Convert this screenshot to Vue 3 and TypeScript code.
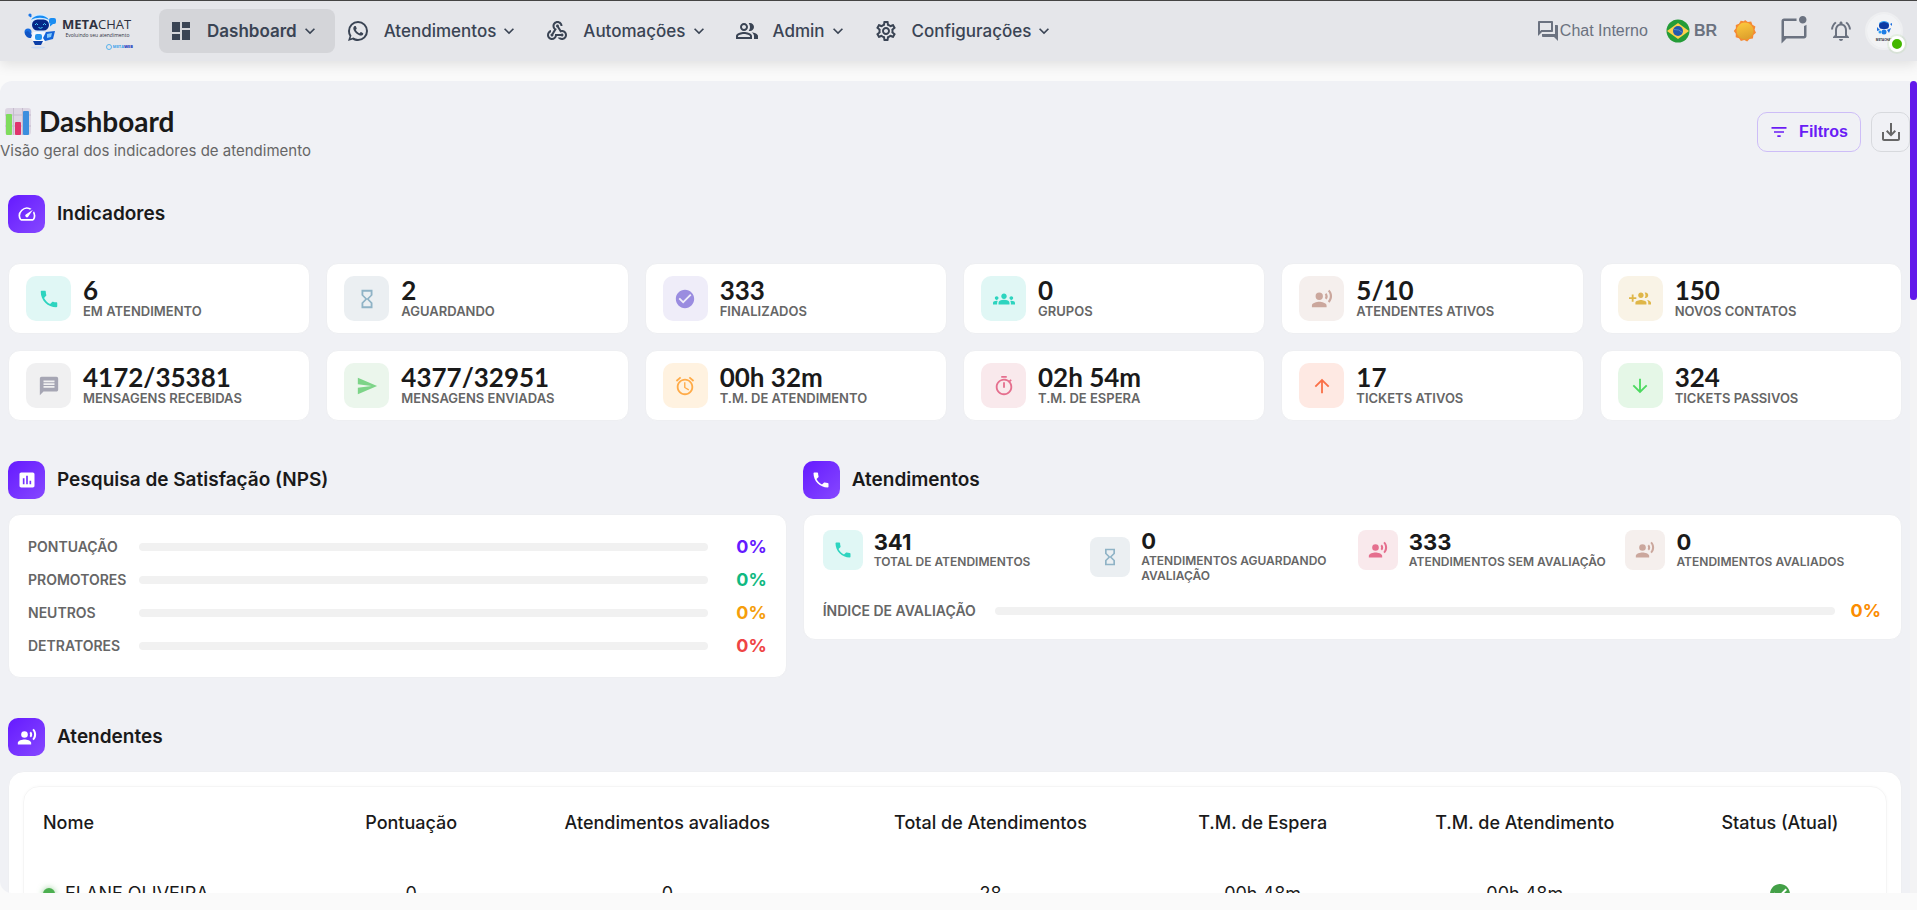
<script setup lang="ts">
interface NavItem { label: string; icon: string; active?: boolean }
interface Kpi { value: string; label: string; icon: string; tone: string }
interface Bar { label: string; value: number; tone: string }
interface Attendant { name: string; score: number; rated: number; total: number; wait: string; service: string }

const icons: Record<string, string> = {
  dashboard: 'M3 13h8V3H3v10zm0 8h8v-6H3v6zm10 0h8V11h-8v10zm0-18v6h8V3h-8z',
  whatsapp: 'M16.75 13.96c.25.13.41.2.46.3.06.11.04.61-.21 1.18-.2.56-1.24 1.1-1.7 1.12-.46.02-.47.36-2.96-.73-2.49-1.09-3.99-3.75-4.11-3.92-.12-.17-.96-1.38-.92-2.61.05-1.22.69-1.8.95-2.04.24-.26.51-.29.68-.26h.47c.15 0 .36-.06.55.45l.69 1.87c.06.13.1.28.01.44l-.27.41-.39.42c-.12.12-.26.25-.12.5.12.26.62 1.09 1.32 1.78.91.88 1.71 1.17 1.95 1.3.24.14.39.12.54-.04l.81-.94c.19-.25.35-.19.58-.11l1.67.88M12 2a10 10 0 0 1 10 10 10 10 0 0 1-10 10c-1.97 0-3.8-.57-5.35-1.55L2 22l1.55-4.65A9.969 9.969 0 0 1 2 12 10 10 0 0 1 12 2m0 2a8 8 0 0 0-8 8c0 1.72.54 3.31 1.46 4.61L4.5 19.5l2.89-.96A7.95 7.95 0 0 0 12 20a8 8 0 0 0 8-8 8 8 0 0 0-8-8z',
  webhook: 'M10 15h5.88c.27-.31.67-.5 1.12-.5.83 0 1.5.67 1.5 1.5s-.67 1.5-1.5 1.5c-.44 0-.84-.19-1.12-.5H11.9c-.46 2.28-2.48 4-4.9 4-2.76 0-5-2.24-5-5 0-2.42 1.72-4.44 4-4.9v2.07c-1.16.41-2 1.53-2 2.83 0 1.65 1.35 3 3 3s3-1.35 3-3v-1zm2.5-11c1.65 0 3 1.35 3 3h2c0-2.76-2.24-5-5-5s-5 2.24-5 5c0 1.43.6 2.71 1.55 3.62l-2.35 3.9c-.68.14-1.2.75-1.2 1.48 0 .83.67 1.5 1.5 1.5s1.5-.67 1.5-1.5c0-.16-.02-.31-.07-.45l3.38-5.63C10.49 9.61 9.5 8.42 9.5 7c0-1.65 1.35-3 3-3zm4.5 9c-.64 0-1.23.2-1.72.54l-3.05-5.07C11.53 8.35 11 7.74 11 7c0-.83.67-1.5 1.5-1.5S14 6.17 14 7c0 .15-.02.29-.06.43l2.19 3.65c.28-.05.57-.08.87-.08 2.76 0 5 2.24 5 5s-2.24 5-5 5c-1.85 0-3.47-1.01-4.33-2.5h2.67c.48.32 1.05.5 1.66.5 1.65 0 3-1.35 3-3s-1.35-3-3-3z',
  people: 'M16.67 13.13C18.04 14.06 19 15.32 19 17v3h4v-3c0-2.18-3.57-3.47-6.33-3.87zM15 12c2.21 0 4-1.79 4-4s-1.79-4-4-4c-.47 0-.91.1-1.33.24C14.5 5.27 15 6.58 15 8s-.5 2.73-1.33 3.76c.42.14.86.24 1.33.24zM9 12c2.21 0 4-1.79 4-4s-1.79-4-4-4-4 1.79-4 4 1.79 4 4 4zm0-6c1.1 0 2 .9 2 2s-.9 2-2 2-2-.9-2-2 .9-2 2-2zm0 7c-2.67 0-8 1.34-8 4v3h16v-3c0-2.66-5.33-4-8-4zm6 5H3v-.99C3.2 16.29 6.3 15 9 15s5.8 1.29 6 2v1z',
  settings: 'M19.43 12.98c.04-.32.07-.64.07-.98 0-.34-.03-.66-.07-.98l2.11-1.65c.19-.15.24-.42.12-.64l-2-3.46c-.09-.16-.26-.25-.44-.25-.06 0-.12.01-.17.03l-2.49 1c-.52-.4-1.08-.73-1.69-.98l-.38-2.65C14.46 2.18 14.25 2 14 2h-4c-.25 0-.46.18-.49.42l-.38 2.65c-.61.25-1.17.59-1.69.98l-2.49-1c-.06-.02-.12-.03-.18-.03-.17 0-.34.09-.43.25l-2 3.46c-.13.22-.07.49.12.64l2.11 1.65c-.04.32-.07.65-.07.98 0 .33.03.66.07.98l-2.11 1.65c-.19.15-.24.42-.12.64l2 3.46c.09.16.26.25.44.25.06 0 .12-.01.17-.03l2.49-1c.52.4 1.08.73 1.69.98l.38 2.65c.03.24.24.42.49.42h4c.25 0 .46-.18.49-.42l.38-2.65c.61-.25 1.17-.59 1.69-.98l2.49 1c.06.02.12.03.18.03.17 0 .34-.09.43-.25l2-3.46c.12-.22.07-.49-.12-.64l-2.11-1.65zm-1.98-1.71c.04.31.05.52.05.73 0 .21-.02.43-.05.73l-.14 1.13.89.7 1.08.84-.7 1.21-1.27-.51-1.04-.42-.9.68c-.43.32-.84.56-1.25.73l-1.06.43-.16 1.13-.2 1.35h-1.4l-.19-1.35-.16-1.13-1.06-.43c-.43-.18-.83-.41-1.23-.71l-.91-.7-1.06.43-1.27.51-.7-1.21 1.08-.84.89-.7-.14-1.13c-.03-.31-.05-.54-.05-.74s.02-.43.05-.73l.14-1.13-.89-.7-1.08-.84.7-1.21 1.27.51 1.04.42.9-.68c.43-.32.84-.56 1.25-.73l1.06-.43.16-1.13.2-1.35h1.39l.19 1.35.16 1.13 1.06.43c.43.18.83.41 1.23.71l.91.7 1.06-.43 1.27-.51.7 1.21-1.07.85-.89.7.14 1.13zM12 8c-2.21 0-4 1.79-4 4s1.79 4 4 4 4-1.79 4-4-1.79-4-4-4zm0 6c-1.1 0-2-.9-2-2s.9-2 2-2 2 .9 2 2-.9 2-2 2z',
  chevron: 'M16.59 8.59 12 13.17 7.41 8.59 6 10l6 6 6-6z',
  forum: 'M15 4v7H5.17L4 12.17V4h11m1-2H3c-.55 0-1 .45-1 1v14l4-4h10c.55 0 1-.45 1-1V3c0-.55-.45-1-1-1zm5 4h-2v9H6v2c0 .55.45 1 1 1h11l4 4V7c0-.55-.45-1-1-1z',
  unread: 'M22 6.98V16c0 1.1-.9 2-2 2H6l-4 4V4c0-1.1.9-2 2-2h10.1c-.06.32-.1.66-.1 1 0 .34.04.68.1 1H4v12h16V7.9c.74-.15 1.42-.48 2-.92zM16 3c0 1.66 1.34 3 3 3s3-1.34 3-3-1.34-3-3-3-3 1.34-3 3z',
  bell: 'M12 22c1.1 0 2-.9 2-2h-4c0 1.1.9 2 2 2zm6-6v-5c0-3.07-1.63-5.64-4.5-6.32V4c0-.83-.67-1.5-1.5-1.5s-1.5.67-1.5 1.5v.68C7.64 5.36 6 7.92 6 11v5l-2 2v1h16v-1l-2-2zm-2 1H8v-6c0-2.48 1.51-4.5 4-4.5s4 2.02 4 4.5v6zM7.58 4.08 6.15 2.65C3.75 4.48 2.17 7.3 2.03 10.5h2c.15-2.65 1.51-4.97 3.55-6.42zm12.39 6.42h2c-.15-3.2-1.73-6.02-4.12-7.85l-1.42 1.43c2.02 1.45 3.39 3.77 3.54 6.42z',
  filter: 'M10 18h4v-2h-4v2zM3 6v2h18V6H3zm3 7h12v-2H6v2z',
  download: 'M19 12v7H5v-7H3v7c0 1.1.9 2 2 2h14c1.1 0 2-.9 2-2v-7h-2zm-6 .67 2.59-2.58L17 11.5l-5 5-5-5 1.41-1.41L11 12.67V3h2z',
  speed: 'M20.38 8.57l-1.23 1.85a8 8 0 0 1-.22 7.58H5.07A8 8 0 0 1 15.58 6.85l1.85-1.23A10 10 0 0 0 3.35 19a2 2 0 0 0 1.72 1h13.85a2 2 0 0 0 1.74-1 10 10 0 0 0-.27-10.44zm-9.79 6.84a2 2 0 0 0 2.83 0l5.66-8.49-8.49 5.66a2 2 0 0 0 0 2.83z',
  chart: 'M19 3H5c-1.1 0-2 .9-2 2v14c0 1.1.9 2 2 2h14c1.1 0 2-.9 2-2V5c0-1.1-.9-2-2-2zM9 17H7v-7h2v7zm4 0h-2V7h2v10zm4 0h-2v-4h2v4z',
  phone: 'M6.62 10.79c1.44 2.83 3.76 5.14 6.59 6.59l2.2-2.2c.27-.27.67-.36 1.02-.24 1.12.37 2.33.57 3.57.57.55 0 1 .45 1 1V20c0 .55-.45 1-1 1-9.39 0-17-7.61-17-17 0-.55.45-1 1-1h3.5c.55 0 1 .45 1 1 0 1.25.2 2.45.57 3.57.11.35.03.74-.25 1.02l-2.2 2.2z',
  voice: 'M9 5a4 4 0 1 0 0 8 4 4 0 0 0 0-8zM9 15c-2.67 0-8 1.34-8 4v2h16v-2c0-2.66-5.33-4-8-4zm7.76-9.64-1.68 1.69c.84 1.18.84 2.71 0 3.89l1.68 1.69c2.02-2.02 2.02-5.07 0-7.27zM20.07 2l-1.63 1.63c2.77 3.02 2.77 7.56 0 10.74L20.07 16c3.9-3.89 3.91-9.95 0-14z',
  hourglass: 'M6 2v6h.01L6 8.01 10 12l-4 4 .01.01H6V22h12v-5.99h-.01L18 16l-4-4 4-3.99-.01-.01H18V2H6zm10 14.5V20H8v-3.5l4-4 4 4zm-4-5-4-4V4h8v3.5l-4 4z',
  check: 'M12 2C6.48 2 2 6.48 2 12s4.48 10 10 10 10-4.48 10-10S17.52 2 12 2zm-2 15-5-5 1.41-1.41L10 14.17l7.59-7.59L19 8l-9 9z',
  groups: 'M12 12.75c1.63 0 3.07.39 4.24.9 1.08.48 1.76 1.56 1.76 2.73V18H6v-1.61c0-1.18.68-2.26 1.76-2.73 1.17-.52 2.61-.91 4.24-.91zM4 13c1.1 0 2-.9 2-2s-.9-2-2-2-2 .9-2 2 .9 2 2 2zm1.13 1.1c-.37-.06-.74-.1-1.13-.1-.99 0-1.93.21-2.78.58C.48 14.9 0 15.62 0 16.43V18h4.5v-1.61c0-.83.23-1.61.63-2.29zM20 13c1.1 0 2-.9 2-2s-.9-2-2-2-2 .9-2 2 .9 2 2 2zm4 3.43c0-.81-.48-1.53-1.22-1.85-.85-.37-1.79-.58-2.78-.58-.39 0-.76.04-1.13.1.4.68.63 1.46.63 2.29V18H24v-1.57zM12 6c1.66 0 3 1.34 3 3s-1.34 3-3 3-3-1.34-3-3 1.34-3 3-3z',
  groupAdd: 'M8 10H5V7H3v3H0v2h3v3h2v-3h3v-2zm10 1c1.66 0 2.99-1.34 2.99-3S19.66 5 18 5c-.32 0-.63.05-.91.14.57.81.9 1.79.9 2.86s-.34 2.04-.9 2.86c.28.09.59.14.91.14zm-5 0c1.66 0 2.99-1.34 2.99-3S14.66 5 13 5c-1.66 0-3 1.34-3 3s1.34 3 3 3zm6.62 2.16c.83.73 1.38 1.66 1.38 2.84v2h3v-2c0-1.54-2.37-2.49-4.38-2.84zM13 13c-2 0-6 1-6 3v2h12v-2c0-2-4-3-6-3z',
  message: 'M20 2H4c-1.1 0-1.99.9-1.99 2L2 22l4-4h14c1.1 0 2-.9 2-2V4c0-1.1-.9-2-2-2zm-2 12H6v-2h12v2zm0-3H6V9h12v2zm0-3H6V6h12v2z',
  send: 'M2.01 21 23 12 2.01 3 2 10l15 2-15 2z',
  alarm: 'm22 5.72-4.6-3.86-1.29 1.53 4.6 3.86L22 5.72zM7.88 3.39 6.6 1.86 2 5.71l1.29 1.53 4.59-3.85zM12.5 8H11v6l4.75 2.85.75-1.23-4-2.37V8zM12 4c-4.97 0-9 4.03-9 9s4.02 9 9 9c4.97 0 9-4.03 9-9s-4.03-9-9-9zm0 16c-3.87 0-7-3.13-7-7s3.13-7 7-7 7 3.13 7 7-3.13 7-7 7z',
  timer: 'M9 1h6v2H9zM19.03 7.39l1.42-1.42c-.43-.51-.9-.99-1.41-1.41l-1.42 1.42C16.07 4.74 14.12 4 12 4c-4.97 0-9 4.03-9 9s4.02 9 9 9 9-4.03 9-9c0-2.12-.74-4.07-1.97-5.61zM12 20c-3.87 0-7-3.13-7-7s3.13-7 7-7 7 3.13 7 7-3.13 7-7 7zm-1-12h2v6h-2z',
  up: 'm4 12 1.41 1.41L11 7.83V20h2V7.83l5.58 5.59L20 12l-8-8-8 8z',
  down: 'm20 12-1.41-1.41L13 16.17V4h-2v12.17l-5.58-5.59L4 12l8 8 8-8z',
}

const nav: NavItem[] = [
  { label: 'Dashboard', icon: 'dashboard', active: true },
  { label: 'Atendimentos', icon: 'whatsapp' },
  { label: 'Automações', icon: 'webhook' },
  { label: 'Admin', icon: 'people' },
  { label: 'Configurações', icon: 'settings' },
]

const kpis: Kpi[] = [
  { value: '6', label: 'EM ATENDIMENTO', icon: 'phone', tone: 'teal' },
  { value: '2', label: 'AGUARDANDO', icon: 'hourglass', tone: 'slate' },
  { value: '333', label: 'FINALIZADOS', icon: 'check', tone: 'violet' },
  { value: '0', label: 'GRUPOS', icon: 'groups', tone: 'teal' },
  { value: '5/10', label: 'ATENDENTES ATIVOS', icon: 'voice', tone: 'brown' },
  { value: '150', label: 'NOVOS CONTATOS', icon: 'groupAdd', tone: 'gold' },
  { value: '4172/35381', label: 'MENSAGENS RECEBIDAS', icon: 'message', tone: 'gray' },
  { value: '4377/32951', label: 'MENSAGENS ENVIADAS', icon: 'send', tone: 'leaf' },
  { value: '00h 32m', label: 'T.M. DE ATENDIMENTO', icon: 'alarm', tone: 'orange' },
  { value: '02h 54m', label: 'T.M. DE ESPERA', icon: 'timer', tone: 'rose' },
  { value: '17', label: 'TICKETS ATIVOS', icon: 'up', tone: 'coral' },
  { value: '324', label: 'TICKETS PASSIVOS', icon: 'down', tone: 'green' },
]

const nps: Bar[] = [
  { label: 'PONTUAÇÃO', value: 0, tone: 'ink-purple' },
  { label: 'PROMOTORES', value: 0, tone: 'ink-green' },
  { label: 'NEUTROS', value: 0, tone: 'ink-amber' },
  { label: 'DETRATORES', value: 0, tone: 'ink-red' },
]

const stats: Kpi[] = [
  { value: '341', label: 'TOTAL DE ATENDIMENTOS', icon: 'phone', tone: 'teal' },
  { value: '0', label: 'ATENDIMENTOS AGUARDANDO AVALIAÇÃO', icon: 'hourglass', tone: 'slate' },
  { value: '333', label: 'ATENDIMENTOS SEM AVALIAÇÃO', icon: 'voice', tone: 'rose' },
  { value: '0', label: 'ATENDIMENTOS AVALIADOS', icon: 'voice', tone: 'brown' },
]

const columns: string[] = ['Nome', 'Pontuação', 'Atendimentos avaliados', 'Total de Atendimentos', 'T.M. de Espera', 'T.M. de Atendimento', 'Status (Atual)']

const attendants: Attendant[] = [
  { name: 'ELANE OLIVEIRA', score: 0, rated: 0, total: 28, wait: '00h 48m', service: '00h 48m' },
]
</script>

<template>
  <div class="page">
    <header class="topbar">
      <a class="brand" href="#" aria-label="MetaChat">
        <svg class="robot" viewBox="0 0 34 36" aria-hidden="true">
          <ellipse cx="15" cy="34.500" rx="7" ry="1" fill="#c9daf3" />
          <path d="M8 4 6.500 1.500" stroke="#1672e8" stroke-width="1.500" />
          <circle cx="7" cy="2" r="1.600" fill="#1976e8" />
          <circle cx="17" cy="10" r="9.500" fill="#d5ebff" />
          <path d="M8 7a10 8 0 0 1 18 0c-5-3-13-3-18 0z" fill="#168cf5" />
          <rect x="9" y="6.500" width="17" height="11" rx="5.500" fill="#072887" />
          <path d="M12 12q1.500-3 3 0M20 12q1.500-3 3 0M15.500 14.500q2 1.500 4 0" stroke="#48d5ff" fill="none" />
          <rect x="26" y="5" width="7" height="6" rx="2" fill="#1a8df2" />
          <path d="m27 11 0 2.500 3-2.500z" fill="#1a8df2" />
          <path d="M10 19h12l2 6-3 5h-9l-4-5z" fill="#f2f8ff" />
          <rect x="12" y="21" width="7" height="6" rx="2" fill="#2394ee" />
          <circle cx="5" cy="19" r="3.500" fill="#176ce0" />
          <path d="M2 19c0 4 2 6 6 6l1-3-4-4z" fill="#1155c4" />
          <path d="m23 19 9-1-2 8-8 2-2-3z" fill="#1465d9" />
          <path d="m24 21 5-1-1 4-4 1z" fill="#84cafa" />
          <path d="M10 28h10l-2 4h-6z" fill="#0a3ea8" />
        </svg>
        <span class="brand-copy">
          <span class="brand-name"><b>META</b>CHAT</span>
          <small>Evoluindo seu atendimento</small>
          <span class="brand-by"><i></i>META<b>WEB</b></span>
        </span>
      </a>

      <nav class="menu">
        <button v-for="item in nav" :key="item.label" type="button" :class="['menu-item', { active: item.active }]">
          <svg class="i24" viewBox="0 0 24 24" aria-hidden="true"><path :d="icons[item.icon]" /></svg>
          <span>{{ item.label }}</span>
          <svg class="i20" viewBox="0 0 24 24" aria-hidden="true"><path :d="icons.chevron" /></svg>
        </button>
      </nav>

      <div class="tools">
        <a class="chat" href="#">
          <svg class="i24" viewBox="0 0 24 24" aria-hidden="true"><path :d="icons.forum" /></svg>Chat Interno
        </a>
        <button class="lang" type="button">
          <svg class="flag" viewBox="0 0 24 24" aria-hidden="true">
            <circle cx="12" cy="12" r="11.500" fill="#249c38" />
            <path d="M12 4 23 12 12 20 1 12z" fill="#fdd04c" />
            <circle cx="12" cy="12" r="5" fill="#2459ae" />
            <path d="M8 10.500q5-.5 8.500 3" stroke="#5687c9" fill="none" />
          </svg>BR
        </button>
        <button class="plain sun" type="button" aria-label="Tema claro">
          <svg class="i24" viewBox="0 0 24 24" aria-hidden="true">
            <defs><linearGradient id="sunFill" x1="0" y1="0" x2="0.300" y2="1"><stop offset="0" stop-color="#ffcb3d" /><stop offset="1" stop-color="#dfa22d" /></linearGradient></defs>
            <path d="m12 1 2.800 1.900 3.400-.3 1.200 3.200 3 1.600-.8 3.400 1.400 3-2.600 2.300-.5 3.500-3.400.4-2.300 2.600-3-1.500-3.300 1-1.900-2.900-3.300-1 .1-3.400L.8 12l2.100-2.700L2.800 6l3.200-1.200L7.700 1.800l3.300.5z" fill="#f58a32" />
            <circle cx="12" cy="12" r="8.500" fill="url(#sunFill)" />
          </svg>
        </button>
        <button class="plain" type="button" aria-label="Mensagens">
          <svg class="i30" viewBox="0 0 24 24" aria-hidden="true"><path :d="icons.unread" /></svg>
        </button>
        <button class="plain bell" type="button" aria-label="Notificações">
          <svg class="i24" viewBox="0 0 24 24" aria-hidden="true"><path :d="icons.bell" /></svg>
        </button>
        <button class="avatar" type="button" aria-label="Perfil">
          <svg viewBox="0 0 34 34" aria-hidden="true">
            <circle cx="17" cy="17" r="17" fill="#f2f3f5" />
            <rect x="12" y="8" width="10" height="7" rx="3.500" fill="#0b3aa4" />
            <path d="M12 10q5-4 10 0v-1q-5-4-10 0z" fill="#2b9cf5" />
            <path d="m10 13 3 3-3 1zm13-3 2-1v3zM20 16l4-2-2 5z" fill="#1a6fe0" />
            <circle cx="17" cy="18" r="2.500" fill="#1e7de6" />
            <circle cx="13" cy="18" r="1.500" fill="#2b9cf5" />
            <text x="17" y="27" text-anchor="middle" class="avatar-text">METACHAT</text>
          </svg>
          <span class="presence"></span>
        </button>
      </div>
    </header>

    <div class="viewport">
      <main class="content">
        <div class="page-head">
          <div>
            <h1>
              <svg class="bars" viewBox="0 0 26 27" aria-hidden="true">
                <rect width="26" height="27" rx="3" fill="#ddd6e3" />
                <path d="M0 7h26M0 18h26M8.500 0v27M17.500 0v27" stroke="#c5bccd" />
                <rect x="1" y="6" width="6" height="21" rx="1" fill="#7fdc5d" />
                <rect x="10" y="14" width="6" height="13" rx="1" fill="#e0356d" />
                <rect x="18" y="3" width="6" height="24" rx="1" fill="#3b8ede" />
              </svg>Dashboard
            </h1>
            <p>Visão geral dos indicadores de atendimento</p>
          </div>
          <div class="actions">
            <button class="btn filter" type="button">
              <svg class="i20" viewBox="0 0 24 24" aria-hidden="true"><path :d="icons.filter" /></svg>Filtros
            </button>
            <button class="btn export" type="button" aria-label="Exportar">
              <svg class="i24" viewBox="0 0 24 24" aria-hidden="true"><path :d="icons.download" /></svg>
            </button>
          </div>
        </div>

        <section class="indicators">
          <h2><span class="badge"><svg class="i20" viewBox="0 0 24 24" aria-hidden="true"><path :d="icons.speed" /></svg></span>Indicadores</h2>
          <div class="kpis">
            <article v-for="k in kpis" :key="k.label" class="card kpi">
              <span :class="['tile', k.tone]"><svg viewBox="0 0 24 24" aria-hidden="true"><path :d="icons[k.icon]" /></svg></span>
              <div>
                <strong>{{ k.value }}</strong>
                <span class="label">{{ k.label }}</span>
              </div>
            </article>
          </div>
        </section>

        <div class="split">
          <section>
            <h2><span class="badge"><svg class="i20" viewBox="0 0 24 24" aria-hidden="true"><path :d="icons.chart" /></svg></span>Pesquisa de Satisfação (NPS)</h2>
            <div class="card nps">
              <div v-for="b in nps" :key="b.label" class="meter">
                <span class="meter-label">{{ b.label }}</span>
                <span class="track"><span class="fill" :style="{ width: b.value + '%' }"></span></span>
                <b :class="b.tone">{{ b.value }}%</b>
              </div>
            </div>
          </section>

          <section>
            <h2><span class="badge"><svg class="i20" viewBox="0 0 24 24" aria-hidden="true"><path :d="icons.phone" /></svg></span>Atendimentos</h2>
            <div class="card service">
              <div class="stats">
                <div v-for="s in stats" :key="s.label" class="stat">
                  <span :class="['tile', 'small', s.tone]"><svg viewBox="0 0 24 24" aria-hidden="true"><path :d="icons[s.icon]" /></svg></span>
                  <div class="stat-copy">
                    <strong>{{ s.value }}</strong>
                    <span class="label">{{ s.label }}</span>
                  </div>
                </div>
              </div>
              <div class="meter index">
                <span class="meter-label">ÍNDICE DE AVALIAÇÃO</span>
                <span class="track"></span>
                <b class="ink-orange">0%</b>
              </div>
            </div>
          </section>
        </div>

        <section class="team">
          <h2><span class="badge"><svg class="i20" viewBox="0 0 24 24" aria-hidden="true"><path :d="icons.voice" /></svg></span>Atendentes</h2>
          <div class="card team-card">
            <div class="table-box">
              <table>
                <colgroup>
                  <col class="c-name"><col class="c-score"><col class="c-rated"><col class="c-total"><col class="c-wait"><col class="c-service"><col class="c-status">
                </colgroup>
                <thead>
                  <tr><th v-for="c in columns" :key="c" scope="col">{{ c }}</th></tr>
                </thead>
                <tbody>
                  <tr v-for="a in attendants" :key="a.name">
                    <td><span class="person"><i class="online"></i>{{ a.name }}</span></td>
                    <td>{{ a.score }}</td>
                    <td>{{ a.rated }}</td>
                    <td>{{ a.total }}</td>
                    <td>{{ a.wait }}</td>
                    <td>{{ a.service }}</td>
                    <td><svg class="i24 ok" viewBox="0 0 24 24" role="img" aria-label="Online"><path :d="icons.check" /></svg></td>
                  </tr>
                </tbody>
              </table>
            </div>
          </div>
        </section>
      </main>
      <div class="scrollbar" aria-hidden="true"><div class="thumb"></div></div>
    </div>
  </div>
</template>

<style>
html, body { background: #fafafa; }
body { margin: 0; overflow: hidden; }
</style>

<style scoped>
* { box-sizing: border-box; }
.page { height: 100vh; display: flex; flex-direction: column; font-family: Inter, "Liberation Sans", sans-serif; color: #1a1a1a; }
button { font: inherit; color: inherit; background: none; border: 0; padding: 0; margin: 0; cursor: pointer; display: flex; align-items: center; }
a { color: inherit; text-decoration: none; }
svg { display: block; flex: none; fill: currentColor; }
.i20 { width: 20px; height: 20px; }
.i24 { width: 24px; height: 24px; }
.i30 { width: 30px; height: 30px; }

.topbar { flex: none; height: 61px; display: flex; align-items: center; border-top: 1px solid #444; background: #e5e6ea; box-shadow: 0 4px 12px rgba(0, 0, 0, .1); padding: 0 14px 0 22px; color: #6b7280; }
.brand { display: flex; width: 137px; height: 36px; flex: none; gap: 4px; }
.robot { width: 36px; height: 36px; }
.brand-copy { display: flex; flex-direction: column; width: 71px; padding-top: 4px; font-family: "Open Sans", sans-serif; color: #2f3140; white-space: nowrap; }
.brand-name { font-size: 13px; line-height: 15px; }
.brand-copy small { font-size: 5px; line-height: 6px; text-align: center; }
.brand-by { display: flex; align-items: center; justify-content: flex-end; font-size: 4px; line-height: 6px; color: #38a0ea; padding-top: 6px; font-weight: 700; }
.brand-by b { color: #2340c0; }
.brand-by i { width: 6px; height: 6px; border: 1px solid #58b2ec; border-radius: 50%; margin-right: 1px; }

.menu { display: flex; gap: 1px; color: #3a4454; }
.menu-item { height: 44px; padding: 0 15px 0 10px; border-radius: 8px; font-size: 17px; font-weight: 500; white-space: nowrap; }
.menu-item span { margin: 0 3px 0 14px; }
.menu-item.active { background: #d4d5d9; font-weight: 600; }
.tools { margin-left: auto; display: flex; align-items: center; font-family: "Liberation Sans", Arial, sans-serif; font-size: 16px; }
.chat { display: flex; align-items: center; margin-right: 18px; }
.lang { gap: 4px; font-weight: 700; margin-right: 16px; }
.flag { width: 24px; height: 24px; }
.sun { margin-right: 22px; }
.bell { margin: 0 12px 0 20px; }
.avatar { position: relative; width: 38px; height: 38px; border: 2px solid #eeeff1; border-radius: 50%; }
.avatar svg { width: 34px; height: 34px; }
.avatar-text { font: 700 3px "Open Sans", sans-serif; fill: #2f3140; }
.presence { position: absolute; right: -4px; bottom: -4px; width: 16px; height: 16px; border-radius: 50%; background: #44b700; border: 3px solid #fff; box-shadow: 0 0 0 2px rgba(68, 183, 0, .08); }

.viewport { flex: 1; min-height: 0; display: flex; margin: 20px 0 17px; }
.content { flex: 1; min-width: 0; overflow: hidden; background: #f0f1f5; border-radius: 12px 0 0 12px; padding: 22px 8px 0; }
.scrollbar { width: 7px; flex: none; background: #f3f3f4; }
.thumb { height: 27%; background: #6219ea; border-radius: 4px; }

.page-head { display: flex; align-items: center; justify-content: space-between; margin: 0 -8px; }
h1 { display: flex; align-items: center; gap: 8px; margin: 0; padding-left: 5px; font: 700 28px/36px Lato, sans-serif; }
.bars { width: 26px; height: 27px; }
p { margin: 0; font-size: 15px; line-height: 24px; color: #666; }
.actions { display: flex; gap: 10px; margin-bottom: 2px; }
.btn { height: 40px; border-radius: 10px; border: 1px solid #cdbdf7; }
.filter { gap: 10px; padding: 0 12px 0 11px; font: 700 16px "Liberation Sans", sans-serif; color: #6a1cf5; }
.export { width: 39px; justify-content: center; border-color: #d7d9dd; color: #666; }

h2 { display: flex; align-items: center; gap: 12px; margin: 0 0 15px; font-size: 19px; line-height: 38px; font-weight: 600; }
.badge { width: 37px; height: 38px; border-radius: 10px; display: grid; place-items: center; color: #fff; background: linear-gradient(135deg, #651aff, #8648ff); }
.indicators { padding-top: 32px; }
.indicators h2 { margin-bottom: 30px; }
.card { background: #fff; border: 1px solid #eeeff2; border-radius: 12px; }
.kpis { display: grid; grid-template-columns: repeat(6, minmax(0, 1fr)); gap: 16px; }
.kpi { display: flex; align-items: center; gap: 12px; padding: 12px 17px; }
.tile { width: 45px; height: 45px; border-radius: 10px; display: grid; place-items: center; flex: none; }
.tile svg { width: 22px; height: 22px; }
.tile.small { width: 40px; height: 40px; border-radius: 8px; }
.tile.small svg { width: 20px; height: 20px; }
.kpi strong, .stat strong { display: block; white-space: nowrap; }
.kpi strong { font: 700 26px/26px Lato, sans-serif; }
.label { display: block; font-size: 13px; line-height: 17px; font-weight: 600; color: #666; }
.teal { background: #e0f7f5; color: #2dd4bf; }
.slate { background: #ebeff2; color: #8fb3c6; }
.violet { background: #efedf9; color: #9a8ce0; }
.brown { background: #f5efed; color: #cba79d; }
.gold { background: #f9f3e6; color: #dfb648; }
.gray { background: #f0f0f1; color: #a6a6b4; }
.leaf { background: #ebf6ec; color: #7dd488; }
.orange { background: #fff2e0; color: #ffab48; }
.rose { background: #f9e9ec; color: #e56f8e; }
.coral { background: #fee9e3; color: #fa7048; }
.green { background: #e5f7e7; color: #4cd95f; }

.split { display: grid; grid-template-columns: 17fr 24fr; gap: 16px; align-items: start; margin-top: 40px; }
.nps { padding: 15px 19px; }
.meter { display: flex; align-items: center; height: 33px; }
.meter-label { width: 111px; flex: none; font-size: 14px; font-weight: 600; color: #666; white-space: nowrap; }
.track { flex: 1; height: 8px; border-radius: 4px; background: #f1f1f1; overflow: hidden; }
.fill { display: block; height: 100%; background: #651aff; }
.meter b { width: 59px; text-align: right; font-size: 18px; font-weight: 700; }
.ink-purple { color: #651aff; }
.ink-green { color: #10b981; }
.ink-amber { color: #f59e0b; }
.ink-red { color: #ef4444; }
.ink-orange { color: #fb8c00; }
.service { padding: 15px 8px 12px 19px; }
.stats { display: grid; grid-template-columns: repeat(4, minmax(0, 1fr)); align-items: start; }
.stat { display: flex; align-items: center; gap: 11px; padding-right: 4px; }
.stat-copy { padding-bottom: 1px; }
.stat strong { font-size: 22px; line-height: 23px; font-weight: 700; }
.stat .label { font-size: 12px; line-height: 15px; }
.index { margin-right: 12px; margin-top: 10px; }
.index .meter-label { width: 172px; }
.index b { width: 46px; }

.team { margin-top: 40px; }
.team-card { padding: 14px; border-radius: 16px; }
.table-box { border: 1px solid #f5f5f5; border-radius: 16px; overflow: hidden; box-shadow: 0 0 3px rgba(0, 0, 0, .03); }
table { width: 100%; border-collapse: collapse; table-layout: fixed; font-size: 18px; }
.c-name { width: 295px; } .c-score { width: 184px; } .c-rated { width: 328px; } .c-total { width: 318px; }
.c-wait { width: 226px; } .c-service { width: 298px; } .c-status { width: 212px; }
th, td { height: 71px; padding: 0 19px; text-align: center; font-weight: 400; }
th { font-weight: 500; white-space: nowrap; }
th:first-child, td:first-child { text-align: left; }
.person { display: flex; align-items: center; gap: 10px; }
.online { width: 12px; height: 12px; border-radius: 50%; background: #4caf50; box-shadow: 0 0 6px rgba(76, 175, 80, .6); }
.ok { margin: 0 auto; color: #43a047; }
</style>
